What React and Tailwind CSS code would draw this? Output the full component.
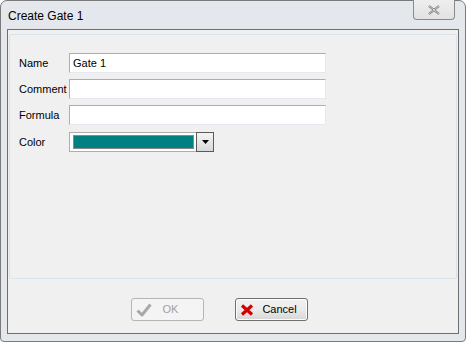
import React from 'react';

const Field = ({ label, value }) => (
  <div className="flex items-center h-[20px]">
    <span className="w-[50px] text-[11px] text-black">{label}</span>
    <div className="w-[257px] h-[20px] bg-white border border-[#abadb3] border-r-[#e3e9ef] border-b-[#e3e9ef] pl-[3px] flex items-center text-[11px] text-black">
      {value}
    </div>
  </div>
);

const App = () => {
  return (
    <div className="w-[466px] h-[342px] bg-white" style={{ fontFamily: '"Liberation Sans", Arial, sans-serif' }}>
      <div className="relative w-[466px] h-[342px] rounded-t-[7px] rounded-b-[4px] border border-[#7a7a7a] bg-[#e4e7eb] flex flex-col px-[6px] pb-[7px]">
        <div className="h-[28px] flex items-center pl-[1px] pt-[2px] text-[12px] text-black">Create Gate 1</div>
        <div className="absolute top-[-1px] right-[10px] w-[42px] h-[20px] rounded-b-[4px] border border-[#8a8a8a] border-t-0 bg-gradient-to-b from-[#eeeeee] to-[#e2e2e2] flex items-center justify-center">
          <svg width="12" height="10" viewBox="0 0 12 10">
            <path d="M1 1 L11 9 M11 1 L1 9" stroke="#6a6a6a" strokeWidth="2.2" fill="none" />
            <path d="M1 1 L11 9 M11 1 L1 9" stroke="#f4f4f4" strokeWidth="0.8" fill="none" />
          </svg>
        </div>
        <div className="flex-1 border border-[#6e6e6e] bg-[#f0f0f0] flex flex-col">
          <div className="mx-[1px] mt-[4px] h-[245px] border border-[#dbe3ea] rounded-[2px] pl-[9px] pt-[18px] flex flex-col gap-[6px]">
            <Field label="Name" value="Gate 1" />
            <Field label="Comment" value="" />
            <Field label="Formula" value="" />
            <div className="flex items-center h-[20px] mt-[1px]">
              <span className="w-[50px] text-[11px] text-black">Color</span>
              <div className="w-[127px] h-[20px] bg-white border border-[#abadb3] border-r-0 flex items-center">
                <div className="ml-[3px] w-[121px] h-[14px] bg-[#008080] border border-[#8a8a8a]"></div>
              </div>
              <div className="w-[18px] h-[20px] border border-[#5a5a5a] bg-gradient-to-b from-[#f4f4f4] to-[#d9d9d9] flex items-center justify-center">
                <svg width="7" height="4" viewBox="0 0 7 4"><path d="M0 0 L7 0 L3.5 4 Z" fill="#000" /></svg>
              </div>
            </div>
          </div>
          <div className="flex-1 flex items-start pt-[19px] pl-[123px] gap-[31px]">
            <div className="w-[73px] h-[23px] rounded-[3px] border border-[#b5b5b5] bg-[#f4f4f4] flex items-center px-[4px]">
              <svg width="16" height="14" viewBox="0 0 16 14">
                <path d="M1.5 7.5 L6 12 L14.5 1.5" stroke="#a8a8a8" strokeWidth="3" fill="none" strokeLinejoin="round" />
              </svg>
              <span className="flex-1 text-center text-[11px] text-[#a0a0a0] pr-[10px]">OK</span>
            </div>
            <div className="w-[73px] h-[23px] rounded-[3px] border border-[#707070] bg-gradient-to-b from-[#f2f2f2] via-[#ebebeb] to-[#d6d6d6] flex items-center px-[4px] shadow-[inset_0_0_0_1px_#fcfcfc]">
              <svg width="14" height="12" viewBox="0 0 14 12">
                <path d="M2 1.5 L12 10.5 M12 1.5 L2 10.5" stroke="#d40000" strokeWidth="3.2" fill="none" />
              </svg>
              <span className="flex-1 text-center text-[11px] text-black pl-[2px]">Cancel</span>
            </div>
          </div>
        </div>
      </div>
    </div>
  );
};

export default App;
